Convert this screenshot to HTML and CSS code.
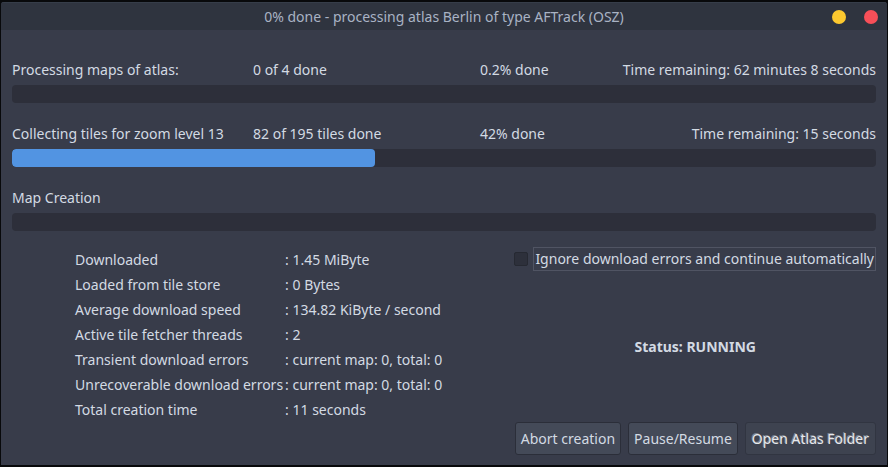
FILE: index.html
```
<!DOCTYPE html>
<html lang="en">
<head>
<meta charset="utf-8">
<title>Atlas creation progress</title>
<link rel="stylesheet" href="styles.css">
</head>
<body>
<main class="window">
  <header class="titlebar">
    <h1 class="title">0% done - processing atlas Berlin of type AFTrack (OSZ)</h1>
    <div class="window-controls">
      <button class="control minimize" type="button" aria-label="Minimize"></button>
      <button class="control close" type="button" aria-label="Close"></button>
    </div>
  </header>
  <div class="content">
    <section class="tasks">
      <div class="task">
        <div class="task-info">
          <label for="atlas-progress">Processing maps of atlas:</label>
          <span>0 of 4 done</span>
          <span>0.2% done</span>
          <span class="remaining">Time remaining: 62 minutes 8 seconds</span>
        </div>
        <progress class="bar" id="atlas-progress" max="100" value="0"></progress>
      </div>
      <div class="task">
        <div class="task-info">
          <label for="tile-progress">Collecting tiles for zoom level 13</label>
          <span>82 of 195 tiles done</span>
          <span>42% done</span>
          <span class="remaining">Time remaining: 15 seconds</span>
        </div>
        <progress class="bar" id="tile-progress" max="195" value="82"></progress>
      </div>
      <div class="task">
        <div class="task-info">
          <label for="map-progress">Map Creation</label>
        </div>
        <progress class="bar" id="map-progress" max="100" value="0"></progress>
      </div>
    </section>
    <section class="details">
      <table class="stats">
        <tbody>
          <tr><th scope="row">Downloaded</th><td>: 1.45 MiByte</td></tr>
          <tr><th scope="row">Loaded from tile store</th><td>: 0 Bytes</td></tr>
          <tr><th scope="row">Average download speed</th><td>: 134.82 KiByte / second</td></tr>
          <tr><th scope="row">Active tile fetcher threads</th><td>: 2</td></tr>
          <tr><th scope="row">Transient download errors</th><td>: current map: 0, total: 0</td></tr>
          <tr><th scope="row">Unrecoverable download errors</th><td>: current map: 0, total: 0</td></tr>
          <tr><th scope="row">Total creation time</th><td>: 11 seconds</td></tr>
        </tbody>
      </table>
      <div class="actions">
        <div class="option">
          <input class="checkbox" type="checkbox" id="ignore-errors">
          <label class="option-label" for="ignore-errors">Ignore download errors and continue automatically</label>
        </div>
        <p class="status">Status: RUNNING</p>
        <div class="buttons">
          <button class="button" type="button">Abort creation</button>
          <button class="button" type="button">Pause/Resume</button>
          <button class="button" type="button" disabled>Open Atlas Folder</button>
        </div>
      </div>
    </section>
  </div>
</main>
</body>
</html>
```
FILE: styles.css
```
* {
  box-sizing: border-box;
}

body {
  margin: 0;
  min-height: 100vh;
  display: flex;
  padding: 2px 1px;
  background: #08090b;
  color: #d3dae3;
  font: 14px/20px "Noto Sans", sans-serif;
}

.window {
  flex: 1;
  display: flex;
  flex-direction: column;
  border-radius: 3px 3px 0 0;
  background: #383c4a;
  overflow: hidden;
}

.titlebar {
  display: grid;
  grid-template-columns: 1fr auto 1fr;
  align-items: center;
  height: 28px;
  padding: 0 9px;
  background: #2f343f;
  border-top: 1px solid #363d49;
}

.title {
  grid-column: 2;
  margin: 0;
  color: #a9b3c4;
  font-size: 14px;
  font-weight: 400;
}

.window-controls {
  display: flex;
  justify-content: flex-end;
  gap: 18px;
}

.control {
  width: 14px;
  height: 14px;
  padding: 0;
  border: 0;
  border-radius: 50%;
}

.minimize {
  background: #fdc92f;
}

.close {
  background: #f84f58;
}

.content {
  flex: 1;
  display: flex;
  flex-direction: column;
  padding: 30px 11px 10px;
}

.tasks {
  display: grid;
  gap: 21px;
}

.task {
  display: grid;
  gap: 5px;
}

.task-info {
  display: grid;
  grid-template-columns: 241fr 227fr 110fr 286fr;
  white-space: nowrap;
}

.remaining {
  text-align: right;
}

.bar {
  appearance: none;
  display: block;
  width: 100%;
  height: 18px;
  border: 0;
  border-radius: 4px;
  background: #2d2f3a;
  overflow: hidden;
}

.bar::-webkit-progress-bar {
  background: #2d2f3a;
}

.bar::-webkit-progress-value {
  border-radius: 4px;
  background: #5294e2;
}

.details {
  flex: 1;
  display: flex;
  justify-content: space-between;
  padding-top: 16px;
}

.stats {
  align-self: flex-start;
  margin-left: 63px;
  border-collapse: collapse;
  white-space: nowrap;
}

.stats th,
.stats td {
  height: 25px;
  padding: 0;
  font-weight: 400;
  text-align: left;
}

.stats th {
  padding-right: 2px;
}

.actions {
  display: flex;
  flex-direction: column;
  justify-content: space-between;
  white-space: nowrap;
}

.option {
  display: flex;
  align-items: center;
  justify-content: flex-end;
  gap: 5px;
}

.checkbox {
  appearance: none;
  width: 14px;
  height: 14px;
  margin: 0;
  border: 1px solid #262932;
  border-radius: 2px;
  background: #2d303b;
}

.checkbox:checked {
  background: #5294e2;
}

.option-label {
  padding: 1px;
  border: 1px solid #505463;
}

.status {
  margin: 0;
  font-weight: 700;
  text-align: center;
}

.buttons {
  display: flex;
  justify-content: flex-end;
  gap: 7px;
}

.button {
  height: 33px;
  padding: 0 5px;
  border: 1px solid #2b2e39;
  border-radius: 3px;
  background: #444a58;
  color: #d3dae3;
  font: inherit;
}

.button:disabled {
  padding: 0 6px;
  border-color: #313541;
  background: #3e4350;
  color: #e6e8ec;
  text-shadow: -1px -1px 0 #7c818c;
}
```
